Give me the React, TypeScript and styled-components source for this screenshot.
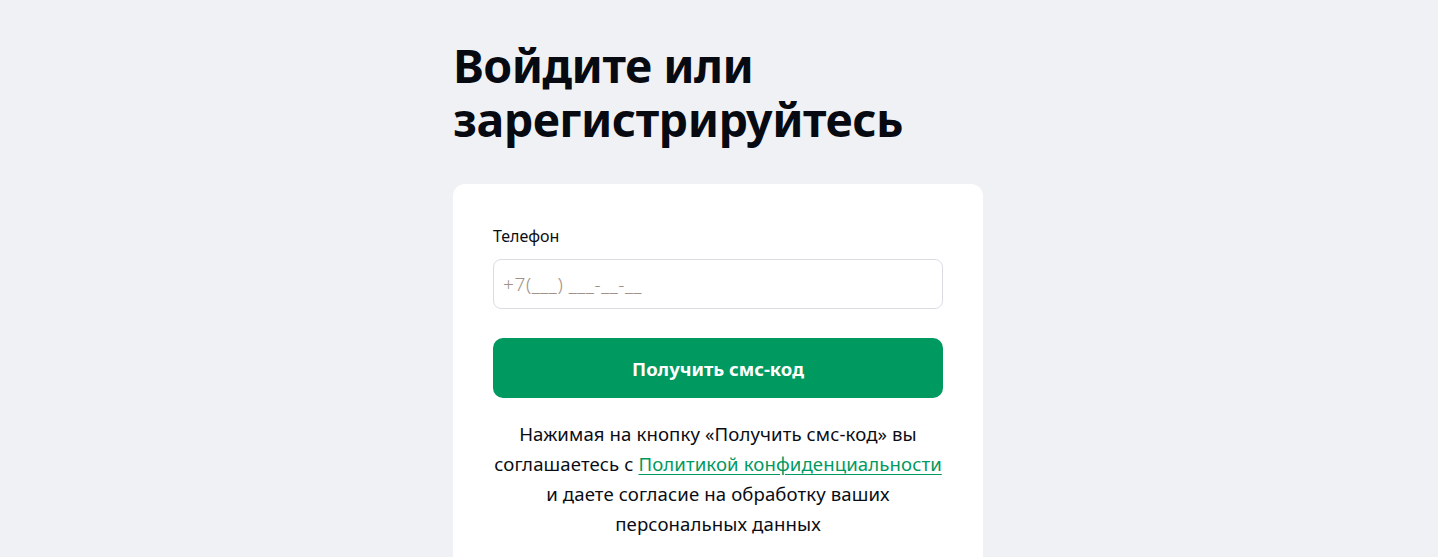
import styled, { createGlobalStyle } from "styled-components";

const GlobalStyle = createGlobalStyle`
  html, body {
    margin: 0;
    padding: 0;
    background: #f0f1f5;
    font-family: "Noto Sans", "Open Sans", sans-serif;
    color: #0a0d14;
  }
`;

const Page = styled.div`
  display: flex;
  justify-content: center;
  padding-top: 38px;
  min-height: 100vh;
  box-sizing: border-box;
`;

const Column = styled.div`
  width: 530px;
  margin-left: -2px;
  display: flex;
  flex-direction: column;
`;

const Title = styled.h1`
  margin: 0 0 38px;
  font-size: 46.5px;
  line-height: 54px;
  font-weight: 700;
  letter-spacing: -0.5px;
  color: #070a10;
`;

const Card = styled.div`
  background: #fff;
  border-radius: 12px;
  padding: 40px 40px 40px;
  display: flex;
  flex-direction: column;
`;

const Label = styled.label`
  font-size: 16px;
  line-height: 24px;
  margin-bottom: 11px;
  margin-top: 0;
`;

const PhoneInput = styled.input`
  height: 50px;
  box-sizing: border-box;
  border: 1px solid #dcdde3;
  border-radius: 8px;
  padding: 0 9px;
  font-family: inherit;
  font-size: 19px;
  font-weight: 300;
  letter-spacing: 0.6px;
  color: #0a0d14;
  outline: none;
  &::placeholder {
    color: #a09288;
  }
`;

const SubmitButton = styled.button`
  margin-top: 29px;
  height: 60px;
  border: none;
  border-radius: 10px;
  background: #00995f;
  color: #fff;
  font-family: inherit;
  font-size: 18.5px;
  font-weight: 700;
  cursor: pointer;
`;

const Note = styled.p`
  margin: 21px -10px 0;
  text-align: center;
  font-size: 18.6px;
  letter-spacing: 0.1px;
  line-height: 30px;
`;

const PolicyLink = styled.a`
  color: #00995f;
  text-decoration: underline;
  text-underline-offset: 3px;
  white-space: nowrap;
`;

export default function App() {
  return (
    <>
      <GlobalStyle />
      <Page>
        <Column>
          <Title>
            Войдите или
            <br />
            зарегистрируйтесь
          </Title>
          <Card>
            <Label htmlFor="phone">Телефон</Label>
            <PhoneInput id="phone" placeholder="+7(___) ___-__-__" />
            <SubmitButton>Получить смс-код</SubmitButton>
            <Note>
              Нажимая на кнопку «Получить смс-код» вы
              <br />
              соглашаетесь с{" "}
              <PolicyLink href="#">Политикой конфиденциальности</PolicyLink>
              <br />
              и даете согласие на обработку ваших
              <br />
              персональных данных
            </Note>
          </Card>
        </Column>
      </Page>
    </>
  );
}
